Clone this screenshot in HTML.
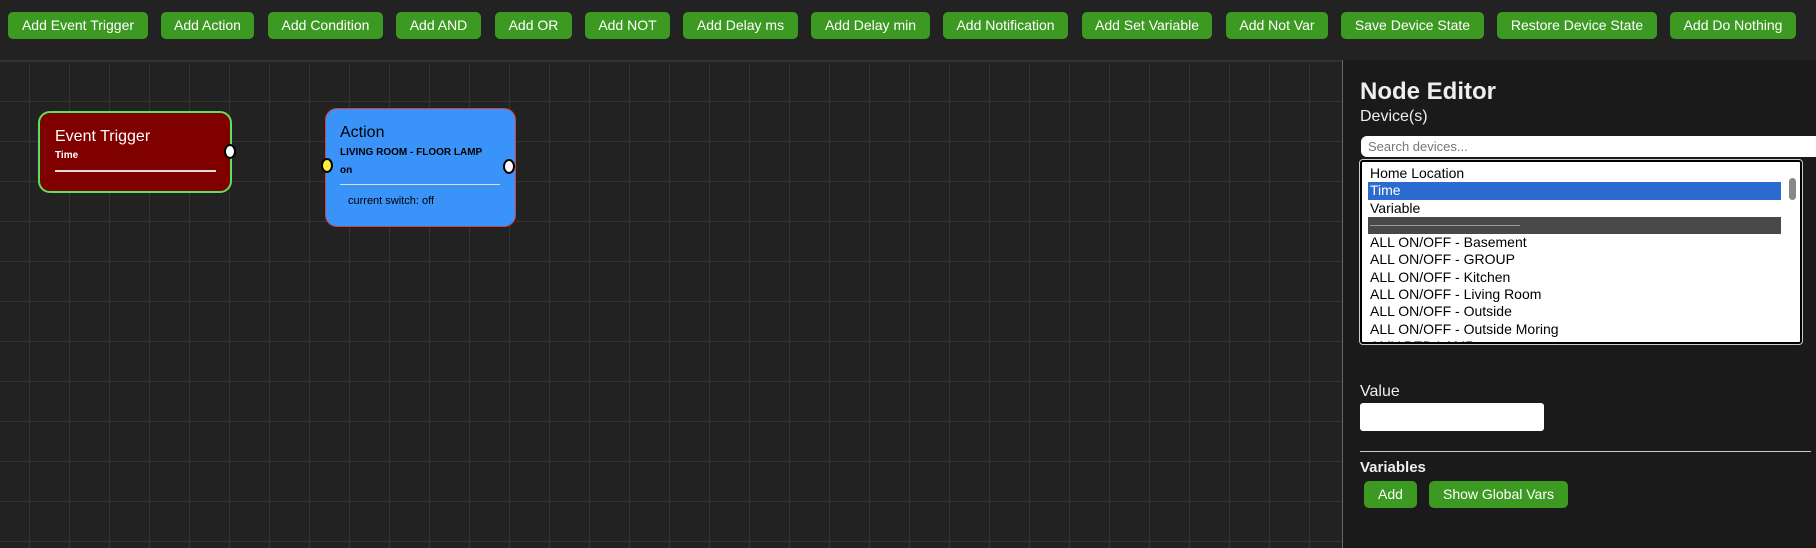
<!DOCTYPE html>
<html><head><style>
*{margin:0;padding:0;box-sizing:border-box}
body{width:1816px;height:548px;overflow:hidden;background:#222;font-family:"Liberation Sans",sans-serif;position:relative}
.b{position:absolute;top:12px;height:27px;background:#3c9a22;color:#fff;border-radius:5px;font-size:14px;line-height:27px;text-align:center;white-space:nowrap}
#canvas{position:absolute;left:0;top:60px;width:1342px;height:488px;border-top:1px solid #333;
background-image:linear-gradient(#333 1px,transparent 1px),linear-gradient(90deg,#333 1px,transparent 1px);
background-size:40px 40px;background-position:29px 0}
.node{position:absolute;border-radius:12px}
.port{position:absolute;width:12px;height:15px;border-radius:50%;border:2px solid #000;background:#fff}
#panel{position:absolute;left:1342px;top:60px;width:474px;height:488px;background:#1a1a1a;border-left:1px solid #666;color:#eee}
.gb{position:absolute;height:27px;background:#3c9a22;color:#fff;border-radius:5px;font-size:14px;line-height:27px;text-align:center}
.it{height:17.3px;line-height:17.3px;padding-left:2px;font-size:14px;color:#000;white-space:nowrap}
</style></head><body>
<div class="b" style="left:8px;width:140px">Add Event Trigger</div>
<div class="b" style="left:161px;width:93px">Add Action</div>
<div class="b" style="left:268px;width:115px">Add Condition</div>
<div class="b" style="left:396px;width:85px">Add AND</div>
<div class="b" style="left:495px;width:77px">Add OR</div>
<div class="b" style="left:585px;width:85px">Add NOT</div>
<div class="b" style="left:683px;width:115px">Add Delay ms</div>
<div class="b" style="left:811px;width:119px">Add Delay min</div>
<div class="b" style="left:943px;width:125px">Add Notification</div>
<div class="b" style="left:1082px;width:130px">Add Set Variable</div>
<div class="b" style="left:1226px;width:102px">Add Not Var</div>
<div class="b" style="left:1341px;width:143px">Save Device State</div>
<div class="b" style="left:1497px;width:160px">Restore Device State</div>
<div class="b" style="left:1670px;width:126px">Add Do Nothing</div>
<div id="canvas"></div>
<div class="node" style="left:38px;top:111px;width:194px;height:82px;background:#800000;border:2px solid #5ee05e"></div>
<div style="position:absolute;left:55px;top:128px;color:#fff;font-size:16px">Event Trigger</div>
<div style="position:absolute;left:55px;top:150px;color:#fff;font-size:10px;font-weight:bold">Time</div>
<div style="position:absolute;left:55px;top:170px;width:161px;height:2px;background:#ddd"></div>
<div class="port" style="left:224px;top:144px"></div>
<div class="node" style="left:325px;top:108px;width:191px;height:119px;background:#3a93f8;border:1px solid #c44"></div>
<div style="position:absolute;left:340px;top:124px;color:#000;font-size:16px">Action</div>
<div style="position:absolute;left:340px;top:147px;color:#000;font-size:10px;font-weight:bold">LIVING ROOM - FLOOR LAMP</div>
<div style="position:absolute;left:340px;top:165px;color:#000;font-size:10px;font-weight:bold">on</div>
<div style="position:absolute;left:340px;top:184px;width:160px;height:1px;background:#ddd"></div>
<div style="position:absolute;left:348px;top:195px;color:#000;font-size:11px">current switch: off</div>
<div class="port" style="left:321px;top:158px;background:#ffeb3b"></div>
<div class="port" style="left:503px;top:159px"></div>
<div id="panel">
<div style="position:absolute;left:17px;top:18px;font-size:24px;font-weight:bold">Node Editor</div>
<div style="position:absolute;left:17px;top:48px;font-size:16px">Device(s)</div>
<div style="position:absolute;left:18px;top:76px;width:460px;height:21px;background:#fff;border-radius:6px;color:#777;font-size:13px;line-height:21px;padding-left:7px">Search devices...</div>
<div style="position:absolute;left:17px;top:100px;width:442px;height:184px;background:#fff;border:2px solid #000;outline:1px solid #ccc;border-radius:3px;overflow:hidden;padding:3px 6px 0 6px">
<div class="it">Home Location</div>
<div class="it" style="background:#2b6bd0;color:#fff;width:413px">Time</div>
<div class="it">Variable</div>
<div class="it" style="background:#484848;width:413px;position:relative"><div style="position:absolute;left:2px;top:8px;width:150px;height:1px;background:#999"></div></div>
<div class="it">ALL ON/OFF - Basement</div>
<div class="it">ALL ON/OFF - GROUP</div>
<div class="it">ALL ON/OFF - Kitchen</div>
<div class="it">ALL ON/OFF - Living Room</div>
<div class="it">ALL ON/OFF - Outside</div>
<div class="it">ALL ON/OFF - Outside Moring</div>
<div class="it">AMY BED LAMP</div>
<div style="position:absolute;right:4px;top:16px;width:7px;height:22px;background:#888;border-radius:4px"></div>
</div>
<div style="position:absolute;left:17px;top:323px;font-size:16px">Value</div>
<div style="position:absolute;left:17px;top:343px;width:184px;height:28px;background:#fff;border-radius:3px"></div>
<div style="position:absolute;left:17px;top:391px;width:451px;height:1px;background:#ccc"></div>
<div style="position:absolute;left:17px;top:399px;font-size:15px;font-weight:bold">Variables</div>
<div class="gb" style="left:21px;top:421px;width:53px">Add</div>
<div class="gb" style="left:86px;top:421px;width:139px">Show Global Vars</div>
</div>
</body></html>
